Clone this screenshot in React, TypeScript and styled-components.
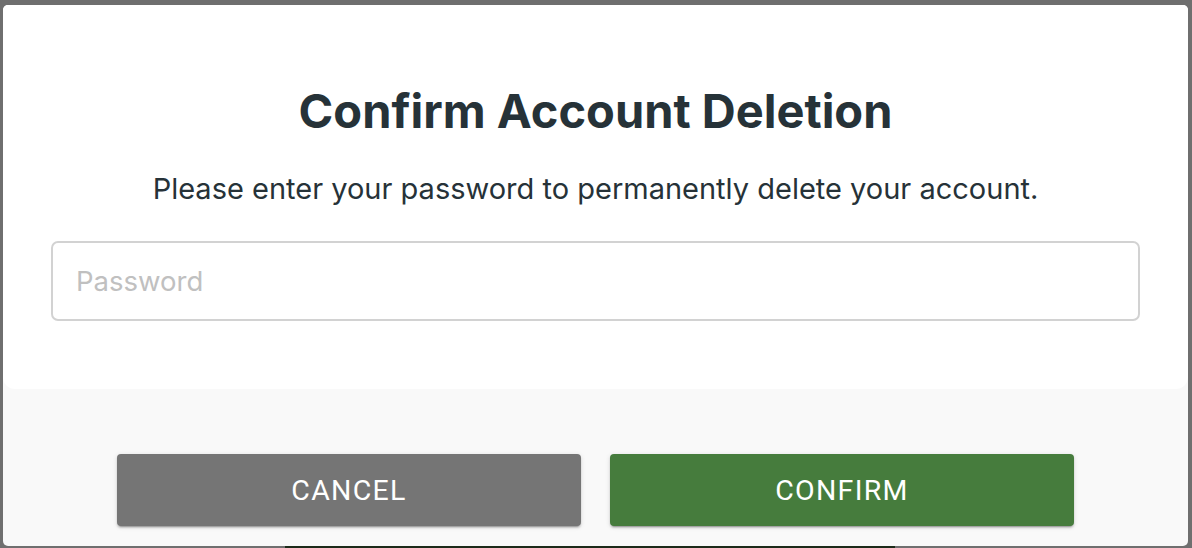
import React from "react";
import styled, { createGlobalStyle } from "styled-components";

const Global = createGlobalStyle`
  html, body { margin: 0; padding: 0; }
  body { background: #6f6f6f; font-family: Inter, "Noto Sans", sans-serif; }
`;

const Backdrop = styled.div`
  position: relative;
  width: 1192px;
  height: 548px;
  overflow: hidden;
  background: #6f6f6f;
  padding: 5px 0 0 3px;
  box-sizing: border-box;
`;

const Behind = styled.div`
  position: absolute;
  left: 285px;
  width: 610px;
  top: 546px;
  height: 20px;
  background: #1c2a19;
`;

const Modal = styled.div`
  position: relative;
  width: 1185px;
  height: 541px;
  background: #f9f9f9;
  border-radius: 5px;
  display: flex;
  flex-direction: column;
  overflow: hidden;
`;

const Body = styled.div`
  background: #ffffff;
  height: 384px;
  box-sizing: border-box;
  border-radius: 0 0 12px 12px;
  padding: 78px 48px 0 48px;
  display: flex;
  flex-direction: column;
  align-items: center;
`;

const Title = styled.h1`
  margin: 0;
  font-family: Inter, sans-serif;
  font-weight: 700;
  font-size: 47px;
  line-height: 56px;
  color: #263238;
`;

const Subtitle = styled.p`
  margin: 32px 0 0 0;
  font-family: Inter, sans-serif;
  font-weight: 400;
  font-size: 29px;
  line-height: 36px;
  color: #263238;
`;

const Input = styled.input`
  margin-top: 34px;
  width: 100%;
  height: 80px;
  box-sizing: border-box;
  border: 2px solid #d2d2d2;
  border-radius: 7px;
  padding: 0 23px;
  font-family: Inter, sans-serif;
  font-size: 27.5px;
  color: #263238;
  outline: none;
  &::placeholder { color: #c0c0c0; }
`;

const Footer = styled.div`
  flex: 1;
  display: flex;
  justify-content: center;
  gap: 29px;
  padding-top: 65px;
`;

const Button = styled.button<{ $tone: "gray" | "green" }>`
  width: 464px;
  height: 72px;
  border: none;
  border-radius: 4px;
  background: ${(p) => (p.$tone === "green" ? "#467c3d" : "#757575")};
  color: #ffffff;
  font-family: Roboto, sans-serif;
  font-weight: 400;
  font-size: 28.5px;
  letter-spacing: 1.3px;
  text-transform: uppercase;
  box-shadow: 0 3px 1px -2px rgba(0,0,0,0.2), 0 2px 2px 0 rgba(0,0,0,0.14), 0 1px 5px 0 rgba(0,0,0,0.12);
  cursor: pointer;
`;

export default function App() {
  return (
    <>
      <Global />
      <Backdrop>
        <Behind />
        <Modal>
          <Body>
            <Title>Confirm Account Deletion</Title>
            <Subtitle>Please enter your password to permanently delete your account.</Subtitle>
            <Input type="password" placeholder="Password" />
          </Body>
          <Footer>
            <Button $tone="gray">Cancel</Button>
            <Button $tone="green">Confirm</Button>
          </Footer>
        </Modal>
      </Backdrop>
    </>
  );
}
